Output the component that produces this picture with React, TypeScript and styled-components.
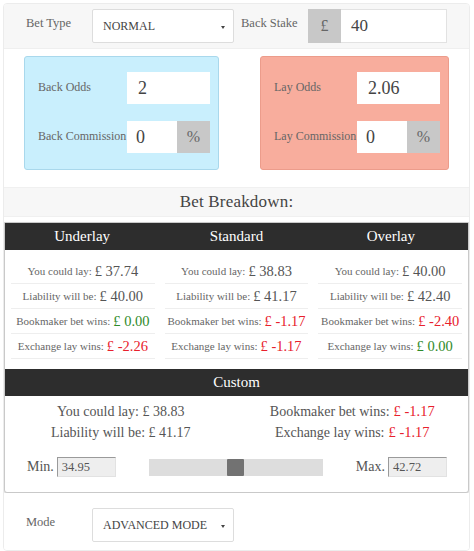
import React from "react";
import styled, { createGlobalStyle } from "styled-components";

const GlobalStyle = createGlobalStyle`
  html, body {
    margin: 0;
    padding: 0;
    background: #ffffff;
    font-family: "Liberation Serif", "DejaVu Serif", serif;
    color: #555;
  }
`;

const Wrapper = styled.div`
  margin: 3px 4px 2px 3px;
  border: 1px solid #ececec;
  border-radius: 4px;
  overflow: hidden;
`;

const TopRow = styled.div<{ $grey?: boolean }>`
  display: flex;
  align-items: center;
  height: 44px;
  padding: ${(p) => (p.$grey ? "0" : "10px 0 3px")};
  background: ${(p) => (p.$grey ? "#f7f7f7" : "#fff")};
  border-bottom: ${(p) => (p.$grey ? "1px solid #efefef" : "none")};
`;

const RowLabel = styled.span<{ $w: number }>`
  width: ${(p) => p.$w}px;
  padding-left: ${(p) => (p.$w > 80 ? 22 : 7)}px;
  box-sizing: border-box;
  font-size: 12.5px;
  color: #666;
  margin-top: -6px;
  white-space: nowrap;
`;

const Select = styled.div`
  position: relative;
  width: 142px;
  height: 34px;
  box-sizing: border-box;
  border: 1px solid #ddd;
  border-radius: 2px;
  background: #fff;
  display: flex;
  align-items: center;
  padding-left: 10px;
  font-size: 12px;
  color: #444;
  white-space: nowrap;
  &::after {
    content: "";
    position: absolute;
    right: 8px;
    top: 16px;
    border-left: 2.5px solid transparent;
    border-right: 2.5px solid transparent;
    border-top: 3px solid #444;
  }
`;

const Group = styled.div<{ $w: number }>`
  display: flex;
  height: 34px;
  width: ${(p) => p.$w}px;
`;

const Addon = styled.div<{ $w: number }>`
  width: ${(p) => p.$w}px;
  background: #c8c8c8;
  color: #666;
  display: flex;
  align-items: center;
  justify-content: center;
  font-size: 16px;
`;

const Field = styled.div<{ $size?: number }>`
  flex: 1;
  background: #fff;
  border: 1px solid #e2e2e2;
  border-left: none;
  display: flex;
  align-items: center;
  padding-left: 10px;
  font-size: ${(p) => p.$size ?? 17}px;
  color: #444;
`;

const Odds = styled.div`
  display: grid;
  grid-template-columns: 195px 189px;
  column-gap: 41px;
  padding: 7px 0 15px 20px;
  background: #fff;
`;

const OddsBox = styled.div<{ $lay?: boolean }>`
  height: 114px;
  box-sizing: border-box;
  border-radius: 3px;
  border: 1px solid ${(p) => (p.$lay ? "#ec9c8b" : "#a9d8ec")};
  background: ${(p) => (p.$lay ? "#f8ad9d" : "#c9effd")};
  padding: 15px 8px 0 13px;
  display: flex;
  flex-direction: column;
  gap: 17px;
`;

const OddsRow = styled.div`
  display: flex;
  align-items: center;
  justify-content: space-between;
  height: 32px;
`;

const OddsLabel = styled.span`
  font-size: 12px;
  color: #666;
  margin-top: -2px;
  white-space: nowrap;
`;

const OddsInput = styled.div`
  width: 83px;
  height: 32px;
  box-sizing: border-box;
  background: #fff;
  display: flex;
  align-items: center;
  padding-left: 11px;
  font-size: 18px;
  color: #444;
`;

const PctGroup = styled.div`
  display: flex;
  flex: none;
  width: 83px;
  height: 32px;
`;

const PctField = styled.div`
  flex: 1;
  background: #fff;
  display: flex;
  align-items: center;
  padding-left: 9px;
  font-size: 18px;
  color: #444;
`;

const Heading = styled.div`
  margin: 2px 0 0;
  height: 28px;
  background: #f7f7f7;
  border-top: 1px solid #f0f0f0;
  border-bottom: 1px solid #f0f0f0;
  display: flex;
  align-items: center;
  justify-content: center;
  font-size: 17px;
  color: #444;
  letter-spacing: 0.2px;
`;

const Card = styled.div`
  margin: 5px 0 0;
  border: 1px solid #c9c9c9;
  border-radius: 0 0 3px 3px;
  box-shadow: 0 1px 2px rgba(0, 0, 0, 0.18);
  background: #fff;
`;

const DarkBar = styled.div<{ $cols: number }>`
  display: grid;
  grid-template-columns: repeat(${(p) => p.$cols}, 1fr);
  height: 27px;
  background: #2d2d2d;
  color: #fff;
  font-size: 15px;
  align-items: center;
  text-align: center;
`;

const Columns = styled.div`
  display: grid;
  grid-template-columns: repeat(3, 1fr);
  column-gap: 10px;
  padding: 9px 6px 10px;
`;

const Column = styled.div`
  display: flex;
  flex-direction: column;
`;

const Cell = styled.div`
  height: 24px;
  display: flex;
  align-items: center;
  justify-content: center;
  border-bottom: 1px solid #eeeeee;
  font-size: 11px;
  color: #666;
  white-space: nowrap;
  gap: 3px;
`;

const Value = styled.span<{ $tone?: "red" | "green" }>`
  font-size: 14.5px;
  color: ${(p) =>
    p.$tone === "red" ? "#e8202c" : p.$tone === "green" ? "#2f8a2a" : "#555"};
`;

const CustomBody = styled.div`
  display: grid;
  grid-template-columns: 1fr 1fr;
  padding: 5px 0 0;
`;

const CustomCol = styled.div`
  display: flex;
  flex-direction: column;
  align-items: center;
`;

const CustomLine = styled.div`
  height: 21px;
  display: flex;
  align-items: center;
  font-size: 14px;
  color: #555;
  white-space: nowrap;
  gap: 4px;
`;

const SliderRow = styled.div`
  display: flex;
  align-items: center;
  padding: 14px 0 15px 22px;
`;

const MinMax = styled.span`
  font-size: 14px;
  color: #555;
  margin-right: 3px;
`;

const SmallInput = styled.div`
  width: 59px;
  height: 20px;
  box-sizing: border-box;
  background: #eeeeee;
  border-top: 1px solid #9a9a9a;
  border-left: 1px solid #9a9a9a;
  border-right: 1px solid #e2e2e2;
  border-bottom: 1px solid #e2e2e2;
  font-size: 12.5px;
  color: #555;
  padding-left: 4px;
  display: flex;
  align-items: center;
`;

const Track = styled.div`
  position: relative;
  width: 174px;
  height: 17px;
  background: #dddddd;
  margin: 0 33px 0 33px;
`;

const Thumb = styled.div`
  position: absolute;
  top: 0;
  width: 17px;
  height: 17px;
  background: #727272;
  border-radius: 1px;
`;

const breakdown = [
  {
    title: "Underlay",
    lay: "37.74",
    liability: "40.00",
    bookie: { v: "0.00", t: "green" as const },
    exchange: { v: "-2.26", t: "red" as const },
  },
  {
    title: "Standard",
    lay: "38.83",
    liability: "41.17",
    bookie: { v: "-1.17", t: "red" as const },
    exchange: { v: "-1.17", t: "red" as const },
  },
  {
    title: "Overlay",
    lay: "40.00",
    liability: "42.40",
    bookie: { v: "-2.40", t: "red" as const },
    exchange: { v: "0.00", t: "green" as const },
  },
];

const App = () => {
  const min = 34.95;
  const max = 42.72;
  const value = 38.83;
  const pos = ((value - min) / (max - min)) * (174 - 17);

  return (
    <>
      <GlobalStyle />
      <Wrapper>
        <TopRow $grey>
          <RowLabel $w={88}>Bet Type</RowLabel>
          <Select>NORMAL</Select>
          <RowLabel $w={74}>Back Stake</RowLabel>
          <Group $w={139}>
            <Addon $w={33}>£</Addon>
            <Field>40</Field>
          </Group>
        </TopRow>

        <Odds>
          <OddsBox>
            <OddsRow>
              <OddsLabel>Back Odds</OddsLabel>
              <OddsInput>2</OddsInput>
            </OddsRow>
            <OddsRow>
              <OddsLabel>Back Commission</OddsLabel>
              <PctGroup>
                <PctField>0</PctField>
                <Addon $w={33}>%</Addon>
              </PctGroup>
            </OddsRow>
          </OddsBox>
          <OddsBox $lay>
            <OddsRow>
              <OddsLabel>Lay Odds</OddsLabel>
              <OddsInput>2.06</OddsInput>
            </OddsRow>
            <OddsRow>
              <OddsLabel>Lay Commission</OddsLabel>
              <PctGroup>
                <PctField>0</PctField>
                <Addon $w={33}>%</Addon>
              </PctGroup>
            </OddsRow>
          </OddsBox>
        </Odds>

        <Heading>Bet Breakdown:</Heading>

        <Card>
          <DarkBar $cols={3}>
            {breakdown.map((b) => (
              <span key={b.title}>{b.title}</span>
            ))}
          </DarkBar>
          <Columns>
            {breakdown.map((b) => (
              <Column key={b.title}>
                <Cell>
                  You could lay: <Value>£ {b.lay}</Value>
                </Cell>
                <Cell>
                  Liability will be: <Value>£ {b.liability}</Value>
                </Cell>
                <Cell>
                  Bookmaker bet wins: <Value $tone={b.bookie.t}>£ {b.bookie.v}</Value>
                </Cell>
                <Cell>
                  Exchange lay wins: <Value $tone={b.exchange.t}>£ {b.exchange.v}</Value>
                </Cell>
              </Column>
            ))}
          </Columns>

          <DarkBar $cols={1}>
            <span>Custom</span>
          </DarkBar>
          <CustomBody>
            <CustomCol>
              <CustomLine>You could lay: £ 38.83</CustomLine>
              <CustomLine>Liability will be: £ 41.17</CustomLine>
            </CustomCol>
            <CustomCol>
              <CustomLine>
                Bookmaker bet wins: <Value $tone="red">£ -1.17</Value>
              </CustomLine>
              <CustomLine>
                Exchange lay wins: <Value $tone="red">£ -1.17</Value>
              </CustomLine>
            </CustomCol>
          </CustomBody>
          <SliderRow>
            <MinMax>Min.</MinMax>
            <SmallInput>34.95</SmallInput>
            <Track>
              <Thumb style={{ left: pos }} />
            </Track>
            <MinMax>Max.</MinMax>
            <SmallInput>42.72</SmallInput>
          </SliderRow>
        </Card>

        <TopRow>
          <RowLabel $w={88}>Mode</RowLabel>
          <Select>ADVANCED MODE</Select>
        </TopRow>
      </Wrapper>
    </>
  );
};

export default App;
